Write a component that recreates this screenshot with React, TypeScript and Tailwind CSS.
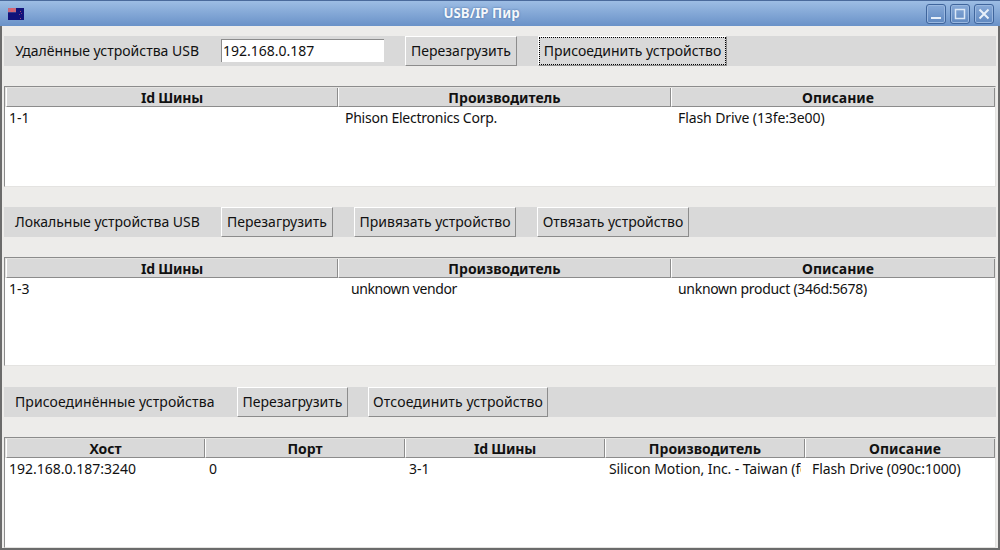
import type { ReactNode } from 'react';

type Column = { title: string; width: string; cell: string; indent?: string; titleClass?: string; cellClass?: string };

function Flag(): ReactNode {
  return (
    <svg width="16" height="12" viewBox="0 0 16 12" className="block">
      <rect width="16" height="12" fill="#12127a" />
      <rect x="0" y="0" width="8" height="4" fill="#c9687c" />
      <rect x="3" y="0" width="2" height="4" fill="#e0606c" />
      <rect x="0" y="4" width="8" height="1" fill="#3a3a88" />
      <rect x="12" y="3" width="1" height="1" fill="#a04a78" />
      <rect x="11" y="6" width="1" height="1" fill="#7a3a80" />
      <rect x="13" y="5" width="1" height="1" fill="#7a3a80" />
      <rect x="12" y="10" width="1" height="1" fill="#a04a78" />
    </svg>
  );
}

function WindowButton({ children }: { children: ReactNode }): ReactNode {
  return (
    <div className="flex h-[20px] w-[20px] items-center justify-center rounded-[3px] border border-[#3f659c] bg-gradient-to-b from-[#88aad8] to-[#5f88c0] shadow-[inset_0_0_0_1px_#9ab8e0]">
      <svg width="14" height="14" viewBox="0 0 14 14">{children}</svg>
    </div>
  );
}

function TitleBar(): ReactNode {
  return (
    <div className="relative flex h-[26px] items-center justify-between border-t border-[#4a6a9c] bg-gradient-to-b from-[#9dbde4] to-[#6a92c8] pl-[8px] pr-[6px]">
      <Flag />
      <span className="absolute left-0 w-[963px] pt-px text-center text-[13.3px] font-bold text-[#f4f7fb] [text-shadow:0_0_2px_#3f659c]">USB/IP Пир</span>
      <div className="flex gap-[4px]">
        <WindowButton>
          <rect x="2" y="10" width="10" height="2" fill="#e8f0fa" />
        </WindowButton>
        <WindowButton>
          <rect x="2.5" y="2.5" width="9" height="9" fill="none" stroke="#dce8f6" strokeWidth="1.5" />
        </WindowButton>
        <WindowButton>
          <path d="M2.5 2.5L11.5 11.5M11.5 2.5L2.5 11.5" stroke="#e8f0fa" strokeWidth="2" />
        </WindowButton>
      </div>
    </div>
  );
}

function TkButton({ label, className, focused }: { label: string; className: string; focused?: boolean }): ReactNode {
  return (
    <div
      className={`flex h-[30px] items-center justify-center whitespace-nowrap border border-b-[#8c8c8c] border-l-white border-r-[#8c8c8c] border-t-white bg-[#d9d9d9] ${className}`}
    >
      {focused ? (
        <span className="flex h-[28px] w-full items-center justify-center border border-dotted border-black">{label}</span>
      ) : (
        label
      )}
    </div>
  );
}

function Toolbar({ children, className }: { children: ReactNode; className: string }): ReactNode {
  return <div className={`flex h-[30px] items-center bg-[#d9d9d9] ${className}`}>{children}</div>;
}

function DeviceTable({ columns, height, className }: { columns: Column[]; height: string; className: string }): ReactNode {
  return (
    <div className={`overflow-hidden border border-b-[#e4e3e1] border-l-[#8c8c8c] border-r-[#e4e3e1] border-t-[#8c8c8c] bg-white ${height} ${className}`}>
      <div className="flex h-[20px] border-l border-t border-[#e4e3e1]">
        {columns.map((column) => (
          <div
            key={column.title}
            className={`flex h-[19px] shrink-0 items-center justify-center border-b border-l border-r border-b-[#8c8c8c] border-l-white border-r-[#8c8c8c] bg-[#d9d9d9] pt-px font-bold ${column.width} ${column.titleClass ?? ''}`}
          >
            {column.title}
          </div>
        ))}
      </div>
      <div className="flex h-[20px] items-center pt-[2px]">
        {columns.map((column) => (
          <div key={column.title} className={`shrink-0 whitespace-nowrap ${column.width}`}>
            <div className={`mr-[3px] overflow-hidden ${column.indent ?? 'pl-[4px]'} leading-[18px] ${column.cellClass ?? ''}`}>{column.cell}</div>
          </div>
        ))}
      </div>
    </div>
  );
}

export default function App(): ReactNode {
  return (
    <div className="h-[550px] w-[1000px] overflow-hidden bg-[#edecea] font-['Noto_Sans',sans-serif] text-[14px] leading-none text-[#111]">
      <TitleBar />
      <div className="flex h-[524px] flex-col border-x-2 border-b-2 border-[#6b6b6b] px-[2px]">
        <Toolbar className="mt-[10px]">
          <span className="ml-[11px] w-[206px] whitespace-nowrap">Удалённые устройства USB</span>
          <div className="mt-[-1px] flex h-[23px] w-[163px] items-center border-l border-t border-l-[#8c8c8c] border-t-[#8c8c8c] bg-white pb-[1px] pl-[1px]">192.168.0.187</div>
          <TkButton label="Перезагрузить" className="ml-[21px] w-[112px]" />
          <TkButton label="Присоединить устройство" className="ml-[21px] w-[189px]" focused />
        </Toolbar>
        <DeviceTable
          className="mt-[20px]"
          height="h-[101px]"
          columns={[
            { title: 'Id Шины', width: 'w-[332px]', cell: '1-1', titleClass: 'tracking-[-0.2px]' },
            { title: 'Производитель', width: 'w-[333px]', cell: 'Phison Electronics Corp.', indent: 'pl-[8px]', cellClass: 'tracking-[-0.25px]' },
            { title: 'Описание', width: 'w-[324px]', cell: 'Flash Drive (13fe:3e00)', indent: 'pl-[8px]', titleClass: 'pl-[10px]', cellClass: 'tracking-[-0.1px]' },
          ]}
        />
        <Toolbar className="mt-[20px]">
          <span className="ml-[11px] w-[206px] whitespace-nowrap">Локальные устройства USB</span>
          <TkButton label="Перезагрузить" className="w-[112px]" />
          <TkButton label="Привязать устройство" className="ml-[21px] w-[162px]" />
          <TkButton label="Отвязать устройство" className="ml-[21px] w-[152px]" />
        </Toolbar>
        <DeviceTable
          className="mt-[20px]"
          height="h-[109px]"
          columns={[
            { title: 'Id Шины', width: 'w-[332px]', cell: '1-3', titleClass: 'tracking-[-0.2px]' },
            { title: 'Производитель', width: 'w-[333px]', cell: 'unknown vendor', indent: 'pl-[14px]', cellClass: 'tracking-[-0.4px]' },
            { title: 'Описание', width: 'w-[324px]', cell: 'unknown product (346d:5678)', indent: 'pl-[8px]', titleClass: 'pl-[10px]', cellClass: 'tracking-[-0.3px]' },
          ]}
        />
        <Toolbar className="mt-[21px]">
          <span className="ml-[11px] w-[222px] whitespace-nowrap tracking-[0.08px]">Присоединённые устройства</span>
          <TkButton label="Перезагрузить" className="w-[111px]" />
          <TkButton label="Отсоединить устройство" className="ml-[20px] w-[180px] tracking-[0.12px]" />
        </Toolbar>
        <DeviceTable
          className="mt-[20px]"
          height="h-[111px]"
          columns={[
            { title: 'Хост', width: 'w-[199px]', cell: '192.168.0.187:3240' },
            { title: 'Порт', width: 'w-[200px]', cell: '0', indent: 'pl-[5px]' },
            { title: 'Id Шины', width: 'w-[200px]', cell: '3-1', indent: 'pl-[5px]', titleClass: 'tracking-[-0.2px]' },
            { title: 'Производитель', width: 'w-[200px]', cell: 'Silicon Motion, Inc. - Taiwan (formerly Feiya)', indent: 'pl-[5px]', cellClass: 'tracking-[-0.1px]' },
            { title: 'Описание', width: 'w-[190px]', cell: 'Flash Drive (090c:1000)', indent: 'pl-[8px]', titleClass: 'pl-[10px]', cellClass: 'tracking-[-0.1px]' },
          ]}
        />
      </div>
    </div>
  );
}
